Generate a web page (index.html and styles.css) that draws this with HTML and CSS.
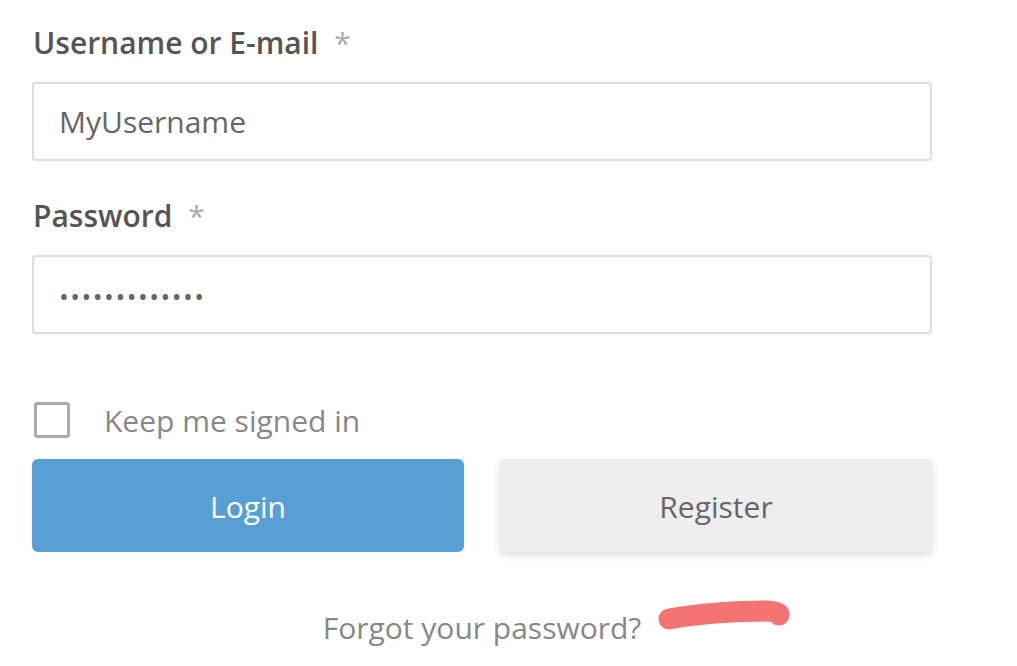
FILE: index.html
```html
<!DOCTYPE html>
<html>
<head>
	<title>Login</title>
	<link rel="stylesheet" href="styles.css">
</head>
<body>

	<form class="login">
		<label class="fieldLabel" for="user">Username or E-mail <span class="req">*</span></label>
		<div class="field" id="user">MyUsername</div>

		<label class="fieldLabel" for="pass">Password <span class="req">*</span></label>
		<div class="field dots" id="pass">&bull;&bull;&bull;&bull;&bull;&bull;&bull;&bull;&bull;&bull;&bull;&bull;&bull;</div>

		<div class="keep">
			<span class="box"></span>
			Keep me signed in
		</div>

		<div class="buttons">
			<a class="btn btnLogin" href="#">Login</a>
			<a class="btn btnRegister" href="#">Register</a>
		</div>

		<div class="forgot">
			<span class="forgotLink">Forgot your password?
				<svg class="scribble" width="140" height="40" viewBox="0 0 140 40">
					<path d="M14 24 C 40 19, 80 16, 110 16 C 119 16, 124 18, 124 20" fill="none" stroke="#f57373" stroke-width="21" stroke-linecap="round"/>
				</svg>
			</span>
		</div>
	</form>

</body>
</html>
```

FILE: styles.css
```css
body{
	margin: 0;
	background: #fff;
	font-family: "Open Sans", "Liberation Sans", sans-serif;
}

.login{
	display: flex;
	flex-direction: column;
	width: 900px;
	padding: 23px 0 0 32px;
}

.fieldLabel{
	font-size: 30px;
	line-height: 40px;
	font-weight: 600;
	color: #555;
	margin-left: 1px;
}

.req{
	font-weight: 400;
	color: #aaa;
	margin-left: 8px;
}

.field{
	box-sizing: border-box;
	height: 79px;
	margin: 19px 0 35px;
	border: 2px solid #ddd;
	border-radius: 4px;
	padding: 0 25px;
	display: flex;
	align-items: center;
	font-size: 30px;
	color: #666;
}

.dots{
	font-size: 26px;
	letter-spacing: 1.5px;
	color: #666;
	padding-top: 2px;
}

.keep{
	display: flex;
	align-items: center;
	gap: 34px;
	margin-top: 33px;
	font-size: 30px;
	color: #888;
	margin-left: 2px;
	height: 36px;
}

.box{
	box-sizing: border-box;
	width: 36px;
	height: 36px;
	border: 3px solid #aaa;
	border-radius: 3px;
}

.buttons{
	display: flex;
	gap: 36px;
	margin-top: 21px;
}

.btn{
	flex: 1;
	height: 93px;
	display: flex;
	align-items: center;
	justify-content: center;
	border-radius: 6px;
	font-size: 30px;
	text-decoration: none;
	padding-top: 2px;
	box-sizing: border-box;
}

.btnLogin{
	background-color: #589fd6;
	color: #fff;
}

.btnRegister{
	background-color: #eee;
	color: #666;
	box-shadow: 0 3px 7px rgba(0, 0, 0, 0.14);
}

.forgot{
	text-align: center;
	margin-top: 56px;
	font-size: 30px;
	line-height: 40px;
	color: #888;
}

.forgotLink{
	position: relative;
}

.scribble{
	position: absolute;
	left: 100%;
	top: -12px;
	margin-left: 14px;
}
```
